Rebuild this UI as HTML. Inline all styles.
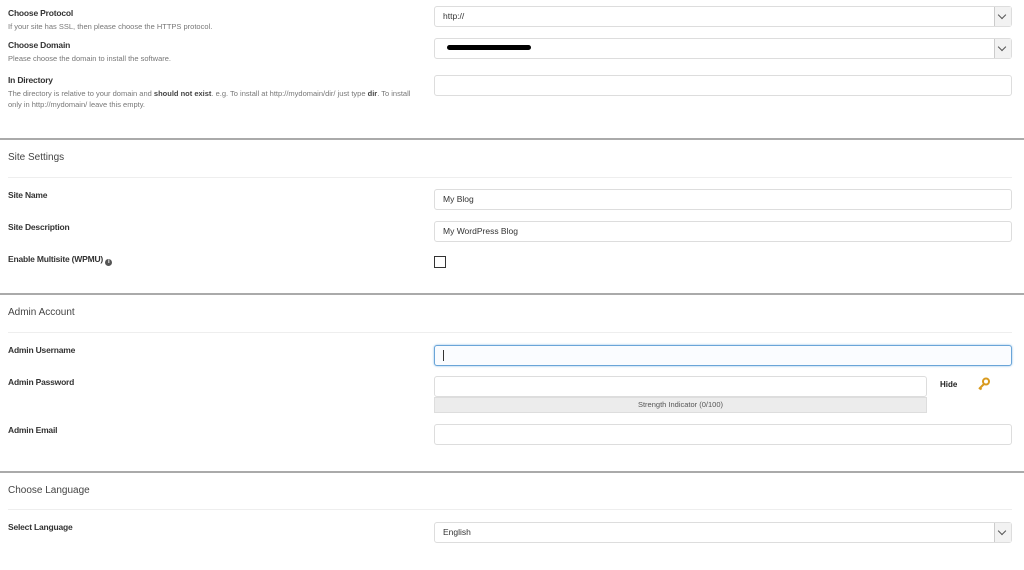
<!DOCTYPE html>
<html><head><meta charset="utf-8"><style>
body{margin:0;width:1024px;height:570px;background:#fff;font-family:"Liberation Sans",sans-serif;position:relative;overflow:hidden;color:#333}
.a{position:absolute}
.l{position:absolute;left:8px;font-size:8.5px;font-weight:bold;color:#333;letter-spacing:-0.2px}
.d{position:absolute;left:8px;font-size:7.5px;color:#777;line-height:11px;width:412px}
.d b{color:#444}
.in{position:absolute;left:434px;width:576px;height:19px;border:1px solid #ddd;border-radius:3px;background:#fff;font-size:8.5px;line-height:19px;text-indent:8px;color:#333}
.sel .ar{position:absolute;right:0;top:0;width:16px;height:19px;border-left:1px solid #ccc;background:#f2f2f2}
.sel .ar:after{content:"";position:absolute;left:4px;top:5px;width:5px;height:5px;border-right:1.3px solid #555;border-bottom:1.3px solid #555;transform:rotate(45deg)}
.sep{position:absolute;left:0;width:1024px;height:2px;background:#aaa}
.thin{position:absolute;left:8px;width:1004px;height:1px;background:#eee}
.h{position:absolute;left:8px;font-size:10px;color:#444}
</style></head><body>
<div class="l" style="top:8px">Choose Protocol</div>
<div class="d" style="top:21px">If your site has SSL, then please choose the HTTPS protocol.</div>
<div class="in sel" style="top:6px">http://<div class="ar"></div></div>
<div class="l" style="top:40px">Choose Domain</div>
<div class="d" style="top:53px">Please choose the domain to install the software.</div>
<div class="in sel" style="top:38px"><div class="a" style="left:12px;top:6px;width:84px;height:5px;background:#000;border-radius:3px"></div><div class="ar"></div></div>
<div class="l" style="top:75px">In Directory</div>
<div class="d" style="top:88px">The directory is relative to your domain and <b>should not exist</b>. e.g. To install at http://mydomain/dir/ just type <b>dir</b>. To install only in http://mydomain/ leave this empty.</div>
<div class="in" style="top:75px"></div>
<div class="sep" style="top:138px"></div>
<div class="h" style="top:152px">Site Settings</div>
<div class="thin" style="top:177px"></div>
<div class="l" style="top:190px">Site Name</div>
<div class="in" style="top:189px">My Blog</div>
<div class="l" style="top:222px">Site Description</div>
<div class="in" style="top:221px">My WordPress Blog</div>
<div class="l" style="top:254px">Enable Multisite (WPMU) <span style="display:inline-block;width:7px;height:7px;border-radius:50%;background:#555;color:#fff;font-size:6px;line-height:7px;text-align:center;vertical-align:-1px">i</span></div>
<div class="a" style="left:434px;top:256px;width:10px;height:10px;border:1px solid #333"></div>
<div class="sep" style="top:293px"></div>
<div class="h" style="top:307px">Admin Account</div>
<div class="thin" style="top:332px"></div>
<div class="l" style="top:345px">Admin Username</div>
<div class="in" style="top:345px;border-color:#6aa5d8;box-shadow:0 0 2px #8bbbe6;background:#fafcff"><span class="a" style="left:8px;top:4px;width:1px;height:11px;background:#333"></span></div>
<div class="l" style="top:377px">Admin Password</div>
<div class="in" style="top:376px;width:491px"></div>
<div class="a" style="left:434px;top:397px;width:491px;height:14px;border:1px solid #ddd;background:#ececec;font-size:7.5px;line-height:14px;text-align:center;color:#555">Strength Indicator (0/100)</div>
<div class="a" style="left:940px;top:380px;font-size:8px;font-weight:bold;color:#222">Hide</div>
<svg class="a" style="left:977px;top:377px" width="14" height="14" viewBox="0 0 14 14"><circle cx="9" cy="4.5" r="3" fill="none" stroke="#d99a1e" stroke-width="2"/><path d="M7 7 L2 12 M3 11 l1.5 1.5" stroke="#d99a1e" stroke-width="2" fill="none"/></svg>
<div class="l" style="top:425px">Admin Email</div>
<div class="in" style="top:424px"></div>
<div class="sep" style="top:471px"></div>
<div class="h" style="top:485px">Choose Language</div>
<div class="thin" style="top:509px"></div>
<div class="l" style="top:522px">Select Language</div>
<div class="in sel" style="top:522px">English<div class="ar"></div></div>
</body></html>
